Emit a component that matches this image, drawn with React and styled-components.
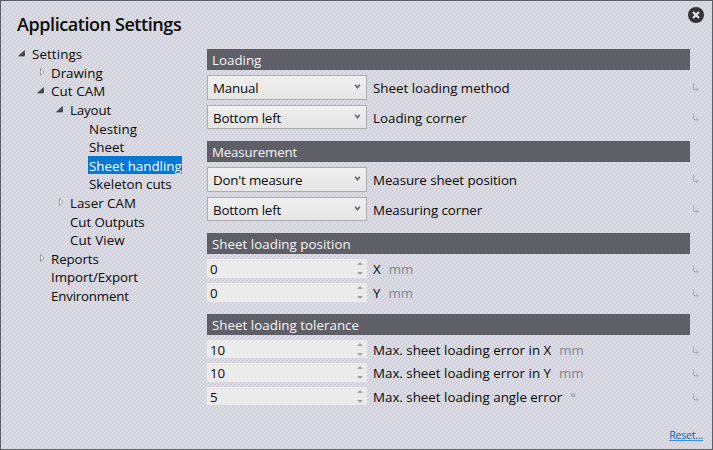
import React from "react";
import styled, { createGlobalStyle } from "styled-components";

const Global = createGlobalStyle`
  * { box-sizing: border-box; }
  body { margin: 0; overflow: hidden; }
`;

const Dialog = styled.div`
  width: 713px;
  height: 450px;
  border: 1px solid #5f6067;
  color: #0a0a0a;
  font: 13.33px/20px "Open Sans", "Noto Sans", sans-serif;
  background: linear-gradient(135deg, #cfd0db 25%, #dedee4 25%, #dedee4 50%, #cfd0db 50%, #cfd0db 75%, #dedee4 75%) 0 0 / 4px 4px;
  display: flex;
  flex-direction: column;
`;

const TitleBar = styled.header`
  height: 44px;
  flex: none;
  display: flex;
  justify-content: space-between;
  padding: 6px 8px 0 16px;
`;

const Title = styled.h1`
  margin: 4px 0 0;
  font-size: 18px;
  line-height: 26px;
  font-weight: 600;
  letter-spacing: -0.42px;
`;

const CloseButton = styled.button`
  width: 16px;
  height: 16px;
  padding: 0;
  border: 0;
  background: none;
  svg { display: block; }
`;

const Content = styled.div`
  display: flex;
  height: 378px;
  flex: none;
`;

const Tree = styled.nav`
  width: 206px;
  flex: none;
  margin-top: -1px;
`;

const Node = styled.div`
  height: ${(p) => p.$h}px;
  padding-left: ${(p) => 15 + p.$level * 19}px;
  display: flex;
  align-items: flex-start;
`;

const Arrow = styled.svg`
  width: 12px;
  height: 10px;
  flex: none;
  margin-top: 4px;
`;

const Label = styled.span`
  letter-spacing: ${(p) => p.$ls || 0}px;
  white-space: nowrap;
`;

const NodeLabel = styled(Label)`
  height: 18px;
  padding: 0 0 0 1px;
  margin-left: 3px;
  background: ${(p) => (p.$selected ? "#0078d7" : "transparent")};
  color: ${(p) => (p.$selected ? "#fff" : "inherit")};
`;

const Panel = styled.main`
  width: 505px;
  padding-top: 4px;
`;

const Section = styled.section`
  height: ${(p) => p.$h}px;
`;

const Heading = styled.h2`
  margin: 0 0 5px;
  width: 483px;
  height: 21px;
  padding-left: 5px;
  background: #5f6067;
  color: #f4f4f6;
  font-size: inherit;
  line-height: 22px;
  font-weight: 400;
`;

const Row = styled.div`
  display: flex;
  align-items: flex-start;
  height: ${(p) => p.$h}px;
  line-height: ${(p) => p.$lh}px;
  margin-bottom: ${(p) => p.$gap}px;
`;

const Select = styled.div`
  width: 160px;
  height: 100%;
  border: 1px solid #acacac;
  background: linear-gradient(#f0f0f0, #e5e5e5);
  padding: 0 5px 0 5px;
  line-height: 24px;
  display: flex;
  align-items: flex-start;
  justify-content: space-between;
  svg { margin-top: 8px; }
`;

const Spinner = styled.div`
  width: 160px;
  height: 100%;
  background: #ebebeb;
  padding: 0 4px 0 3px;
  display: flex;
  align-items: flex-start;
  justify-content: space-between;
  svg { margin-top: 3px; }
`;

const Caption = styled.div`
  margin-left: 6px;
  flex: 1;
  white-space: nowrap;
`;

const Unit = styled(Label)`
  color: #85868e;
  margin-left: 8px;
`;

const Inherit = styled.svg`
  width: 7px;
  height: 9px;
  margin: ${(p) => p.$top}px 13px 0 0;
`;

const Footer = styled.footer`
  display: flex;
  justify-content: flex-end;
  padding: 3px 9px 0 0;
`;

const Reset = styled.a`
  font-size: 10.67px;
  line-height: 18px;
  letter-spacing: -0.25px;
  color: #0066cc;
  text-decoration: underline;
  text-decoration-color: #3393f0;
`;

const nodes = [
  ["Settings", 0, "open", 0.1, 19],
  ["Drawing", 1, "closed", 0, 18],
  ["Cut CAM", 1, "open", 0.1, 19],
  ["Layout", 2, "open", -0.15, 19],
  ["Nesting", 3, "", 0.1, 18],
  ["Sheet", 3, "", 0, 19],
  ["Sheet handling", 3, "", 0, 18],
  ["Skeleton cuts", 3, "", 0, 19],
  ["Laser CAM", 2, "closed", 0, 19],
  ["Cut Outputs", 2, "", -0.08, 18],
  ["Cut View", 2, "", 0.1, 19],
  ["Reports", 1, "closed", -0.1, 18],
  ["Import/Export", 1, "", -0.08, 19],
  ["Environment", 1, "", -0.2, 19],
];

const sections = [
  { title: "Loading", ls: 0, h: 92, rows: [
    { select: "Manual", vls: -0.2, label: "Sheet loading method", h: 25, gap: 5 },
    { select: "Bottom left", vls: -0.18, label: "Loading corner", h: 24, gap: 0 },
  ] },
  { title: "Measurement", ls: -0.18, h: 92, rows: [
    { select: "Don't measure", vls: -0.18, label: "Measure sheet position", ls: -0.08, h: 25, gap: 5 },
    { select: "Bottom left", vls: -0.18, label: "Measuring corner", ls: -0.06, h: 24, gap: 0 },
  ] },
  { title: "Sheet loading position", ls: 0.03, h: 81, rows: [
    { value: "0", label: "X", unit: "mm", h: 19, gap: 5 },
    { value: "0", label: "Y", unit: "mm", h: 19, gap: 0 },
  ] },
  { title: "Sheet loading tolerance", ls: 0.03, h: 92, rows: [
    { value: "10", label: "Max. sheet loading error in X", unit: "mm", h: 18, gap: 5 },
    { value: "10", label: "Max. sheet loading error in Y", unit: "mm", h: 19, gap: 5 },
    { value: "5", label: "Max. sheet loading angle error", unit: "°", h: 18, gap: 0 },
  ] },
];

function TreeArrow({ state }) {
  return (
    <Arrow viewBox="0 0 12 10">
      {state === "open" && <path d="M8.5 2.5v5.5H2.5z" fill="#47474b" stroke="#303033" strokeWidth=".6" />}
      {state === "closed" && <path d="M5.5 1.5v7L9 5z" fill="#fafafa" stroke="#929298" strokeWidth=".9" />}
    </Arrow>
  );
}

export default function App() {
  return (
    <Dialog>
      <Global />
      <TitleBar>
        <Title>Application Settings</Title>
        <CloseButton aria-label="Close">
          <svg width="16" height="16" viewBox="0 0 16 16">
            <circle cx="8" cy="8" r="8" fill="#333335" />
            <path d="M5 5l6 6M11 5l-6 6" stroke="#e6e6ec" strokeWidth="2.2" />
          </svg>
        </CloseButton>
      </TitleBar>
      <Content>
        <Tree>
          {nodes.map(([text, level, state, ls, h]) => (
            <Node key={text} $level={level} $h={h}>
              <TreeArrow state={state} />
              <NodeLabel $ls={ls} $selected={text === "Sheet handling"}>{text}</NodeLabel>
            </Node>
          ))}
        </Tree>
        <Panel>
          {sections.map((s) => (
            <Section key={s.title} $h={s.h}>
              <Heading><Label $ls={s.ls}>{s.title}</Label></Heading>
              {s.rows.map((r) => (
                <Row key={r.label} $h={r.h} $lh={r.select ? 26 : 20} $gap={r.gap}>
                  {r.select ? (
                    <Select>
                      <Label $ls={r.vls}>{r.select}</Label>
                      <svg width="7" height="6" viewBox="0 0 7 6"><path d="M1.2 .8l2.3 3 2.3-3" fill="none" stroke="#606060" strokeWidth="1.5" /></svg>
                    </Select>
                  ) : (
                    <Spinner>
                      <Label>{r.value}</Label>
                      <svg width="6" height="13" viewBox="0 0 6 13"><path d="M0 3L3 0l3 3zM0 10h6l-3 3z" fill="#a2a2a2" /></svg>
                    </Spinner>
                  )}
                  <Caption>
                    <Label $ls={r.ls}>{r.label}</Label>
                    {r.unit && <Unit>{r.unit}</Unit>}
                  </Caption>
                  <Inherit $top={r.select ? 8 : 6} viewBox="0 0 7 9"><path d="M1.5 0v6.5H6M4 4.5l2 2-2 2" fill="none" stroke="#acacac" /></Inherit>
                </Row>
              ))}
            </Section>
          ))}
        </Panel>
      </Content>
      <Footer><Reset>Reset...</Reset></Footer>
    </Dialog>
  );
}
